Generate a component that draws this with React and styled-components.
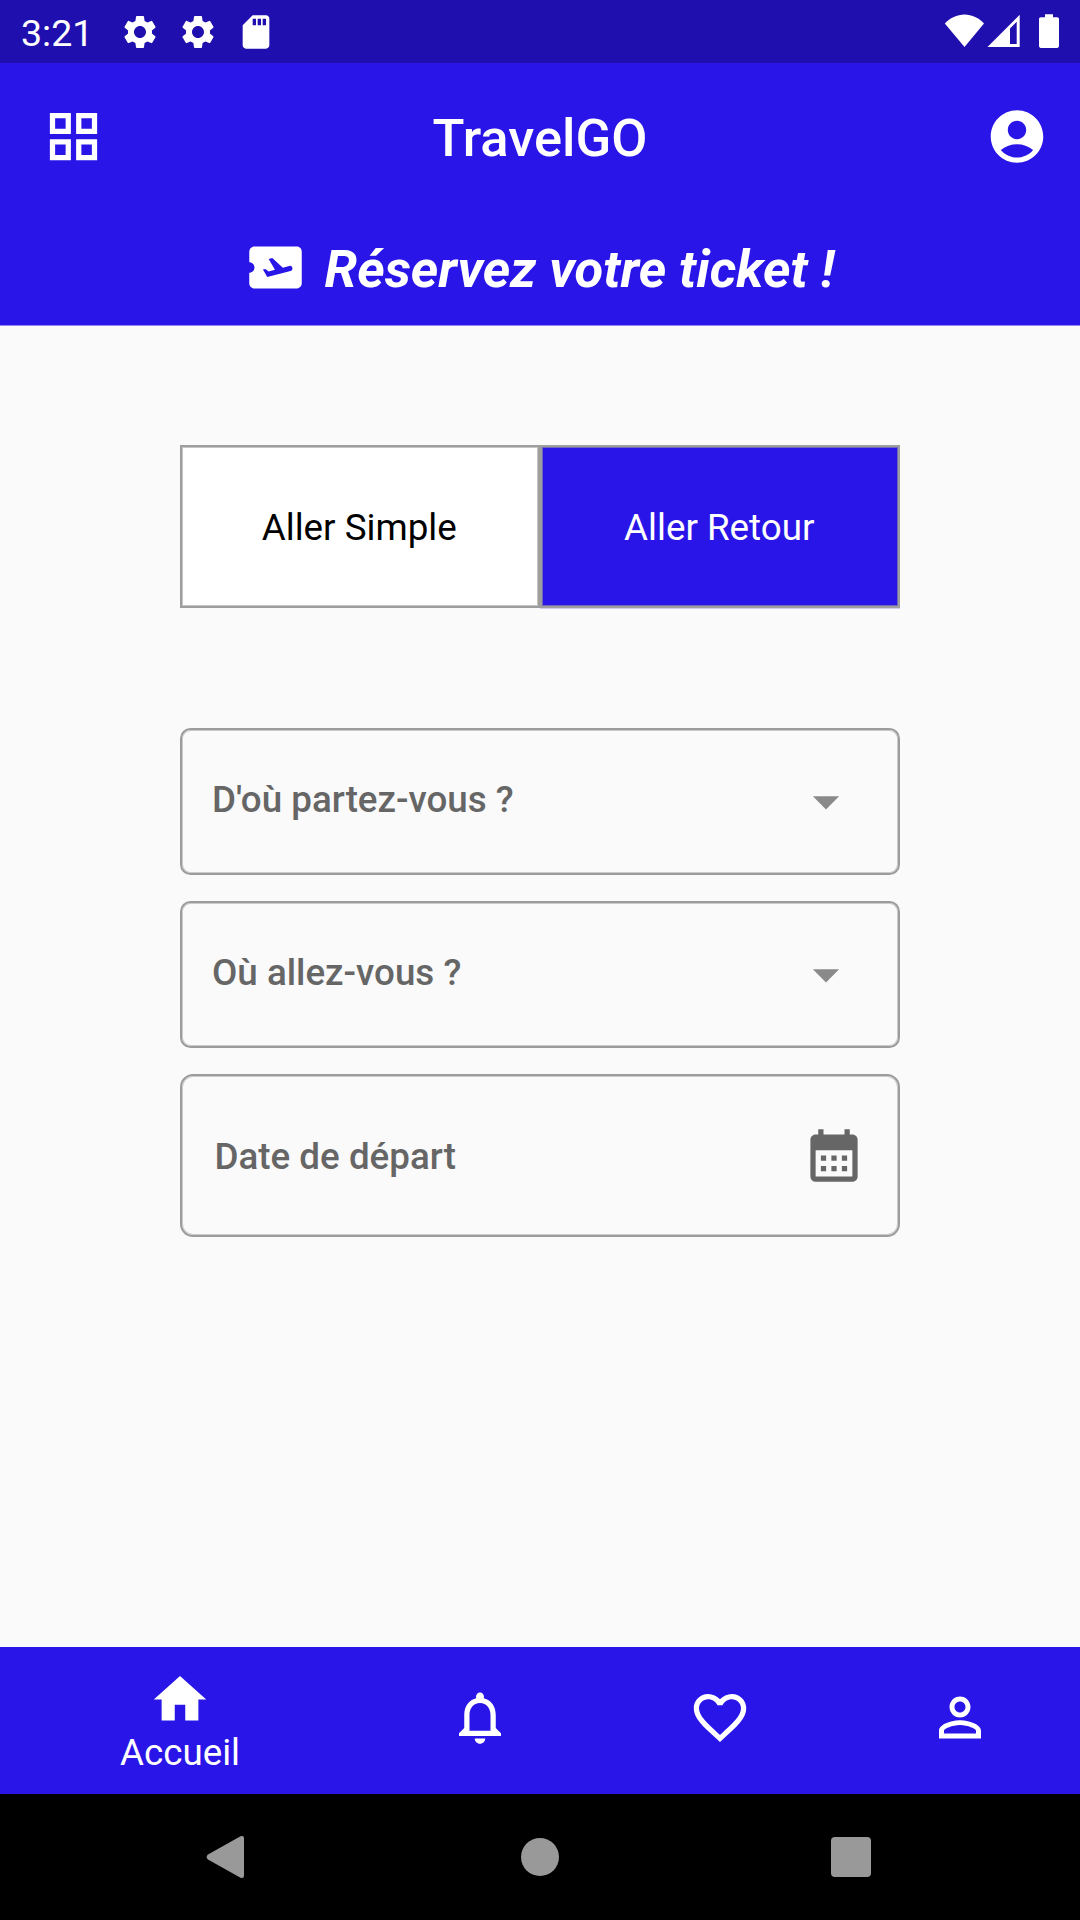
import React from 'react';
import styled, { createGlobalStyle } from 'styled-components';
import {
  MdOutlineGridView,
  MdAccountCircle,
  MdAirplaneTicket,
  MdArrowDropDown,
  MdCalendarMonth,
  MdFavoriteBorder,
  MdSettings,
  MdSdCard,
} from 'react-icons/md';

const BLUE = '#2915e8';

const GlobalStyle = createGlobalStyle`
  * { box-sizing: border-box; }
  body { margin: 0; background: #fafafa; }
  button { font: inherit; color: inherit; background: none; border: 0; padding: 0; }
`;

const Screen = styled.div`
  display: flex;
  flex-direction: column;
  width: 1080px;
  height: 1920px;
  overflow: hidden;
  background: #fafafa;
  font-family: Roboto, 'Liberation Sans', sans-serif;
  font-size: 36.75px;
`;

const StatusBar = styled.div`
  display: flex;
  align-items: center;
  justify-content: space-between;
  height: 63px;
  flex: none;
  padding: 0 21px;
  background: #1f0fae;
  color: #fff;
`;

const StatusGroup = styled.div`
  display: flex;
  align-items: center;
  height: 63px;
`;

const Clock = styled.span`
  width: 99px;
  padding-top: 4px;
  font-size: 37.5px;
  line-height: 43px;
`;

const StatusIcon = styled.span`
  display: flex;
  width: 40px;
  margin-right: 18px;
  svg { width: 40px; height: 40px; }
`;

const Header = styled.header`
  display: flex;
  flex-direction: column;
  flex: none;
  height: 262px;
  background: ${BLUE};
  box-shadow: 0 1px 0 rgba(41, 20, 232, 0.5);
  color: #fff;
`;

const AppBar = styled.div`
  display: grid;
  grid-template-columns: 63px 1fr 63px;
  align-items: center;
  height: 147px;
  padding: 0 32px 0 42px;
`;

const Title = styled.h1`
  margin: 0;
  padding: 2px 10px 0 0;
  text-align: center;
  font-size: 52.5px;
  font-weight: 500;
  line-height: 62px;
`;

const Banner = styled.div`
  display: flex;
  align-items: center;
  justify-content: center;
  gap: 18px;
  height: 115px;
  padding-right: 2px;
`;

const BannerText = styled.h2`
  margin: 0;
  padding-top: 2px;
  font-size: 52.5px;
  font-weight: 700;
  font-style: italic;
  line-height: 62px;
`;

const Glyph = styled.span`
  display: flex;
  color: ${(p) => p.$color || 'inherit'};
  svg {
    width: 63px;
    height: 63px;
    transform: ${(p) => (p.$half ? 'translateX(0.5px)' : 'none')};
  }
`;

const Content = styled.main`
  display: flex;
  flex-direction: column;
  flex: 1;
  width: 720px;
  margin: 0 auto;
  padding-top: 120px;
`;

const Toggle = styled.div`
  display: grid;
  grid-template-columns: 1fr 1fr;
  height: 163px;
  margin-bottom: 120px;
`;

const ToggleOption = styled.button`
  padding: 2px 1.5px 0 0;
  border: 2px solid #9e9e9e;
  box-shadow:
    inset 0 0 0 1px rgba(158, 158, 158, 0.6),
    0 1px 0 ${(p) => (p.$active ? 'rgba(41, 20, 232, 0.2)' : 'transparent')};
  background: ${(p) => (p.$active ? BLUE : '#fff')};
  color: ${(p) => (p.$active ? '#fff' : '#000')};
`;

const Field = styled.div`
  display: flex;
  align-items: center;
  justify-content: space-between;
  height: ${(p) => p.$height}px;
  margin-bottom: 26px;
  padding: ${(p) => p.$padding};
  border: 2px solid #9c9c9c;
  border-radius: ${(p) => p.$radius}px;
  box-shadow: inset 0 0 0 1px rgba(156, 156, 156, 0.5);
  color: #666;
  font-weight: 500;
`;

const FieldLabel = styled.span`
  line-height: 43px;
  padding-top: ${(p) => p.$drop || 0}px;
  padding-bottom: ${(p) => p.$lift || 0}px;
`;

const BottomNav = styled.nav`
  display: grid;
  grid-template-columns: 1.5fr 1fr 1fr 1fr;
  flex: none;
  height: 147px;
  background: ${BLUE};
  color: #fff;
`;

const NavItem = styled.button`
  display: flex;
  flex-direction: column;
  align-items: center;
  justify-content: flex-start;
  padding: ${(p) => (p.$active ? 21 : 39)}px 1px 0 0;
`;

const NavLabel = styled.span`
  padding-left: 1px;
  line-height: 43px;
`;

const SystemNav = styled.div`
  display: grid;
  grid-template-columns: 39px 1fr 40px;
  align-items: center;
  justify-items: center;
  flex: none;
  height: 126px;
  padding: 0 209px 0 206px;
  background: #000;
`;

const Wifi = () => (
  <svg width="40" height="34" viewBox="0 0 40 34">
    <path fill="#fff" d="M20.500 33 .8 9.600C6 4 13 .500 20.500 .500S35 4 40 9.600z" />
  </svg>
);

const Cell = () => (
  <svg width="33" height="34" viewBox="0 0 33 34">
    <path fill="#fff" fillRule="evenodd" d="M.5 33 32.700.700V33zM23 14.500V30h6.700V7.800z" />
  </svg>
);

const Battery = () => (
  <svg width="20" height="34" viewBox="0 0 20 34">
    <path fill="#fff" d="M6 .3h8v3h4.200c1 0 1.800.800 1.800 1.800v27c0 1-.800 1.800-1.800 1.800H1.800C.800 33.900 0 33.100 0 32.100v-27c0-1 .800-1.800 1.800-1.800H6z" />
  </svg>
);

const SignalIcons = styled.div`
  display: flex;
  align-items: center;
  height: 63px;
  gap: 3px;
  padding-bottom: 1px;
  svg:last-child { margin-left: 16px; }
`;

const Home = () => (
  <svg viewBox="0 0 24 24" fill="currentColor">
    <path d="M10 20v-6h4v6h5v-8h3L12 3 2 12h3v8z" />
  </svg>
);

const Bell = () => (
  <svg viewBox="0 0 24 24" fill="currentColor">
    <path d="M12 22c1.100 0 2-.9 2-2h-4c0 1.100.9 2 2 2zm6-6v-5c0-3.070-1.630-5.640-4.500-6.320V4c0-.830-.670-1.500-1.500-1.500s-1.500.670-1.500 1.500v.680C7.640 5.360 6 7.920 6 11v5l-2 2v1h16v-1l-2-2zm-2 1H8v-6c0-2.480 1.510-4.500 4-4.500s4 2.020 4 4.500v6z" />
  </svg>
);

const Person = () => (
  <svg viewBox="0 0 24 24" fill="currentColor">
    <path d="M12 5.900c1.160 0 2.100.940 2.100 2.100s-.940 2.100-2.100 2.100S9.900 9.160 9.900 8s.940-2.100 2.100-2.100m0 9c2.970 0 6.100 1.460 6.100 2.100v1.100H5.900V17c0-.640 3.130-2.100 6.100-2.100M12 4C9.790 4 8 5.790 8 8s1.790 4 4 4 4-1.790 4-4-1.790-4-4-4zm0 9c-2.670 0-8 1.340-8 4v3h16v-3c0-2.660-5.330-4-8-4z" />
  </svg>
);

const BackKey = () => (
  <svg width="39" height="44" viewBox="0 0 39 44">
    <path fill="#999" d="M2 19.600 34.500 1.200Q38 .200 38 3v38q0 2.800-3.500 1.800L2 24.400Q-.800 22 2 19.600z" />
  </svg>
);

const HomeKey = styled.span`
  width: 38.5px;
  height: 38.5px;
  margin-left: 4px;
  border-radius: 50%;
  background: #999;
`;

const RecentsKey = styled.span`
  width: 40px;
  height: 40px;
  border-radius: 4px;
  background: #999;
`;

export default function App() {
  return (
    <Screen>
      <GlobalStyle />
      <StatusBar>
        <StatusGroup>
          <Clock>3:21</Clock>
          <StatusIcon><MdSettings /></StatusIcon>
          <StatusIcon><MdSettings /></StatusIcon>
          <StatusIcon><MdSdCard /></StatusIcon>
        </StatusGroup>
        <SignalIcons>
          <Wifi />
          <Cell />
          <Battery />
        </SignalIcons>
      </StatusBar>
      <Header>
        <AppBar>
          <Glyph><MdOutlineGridView /></Glyph>
          <Title>TravelGO</Title>
          <Glyph $half><MdAccountCircle /></Glyph>
        </AppBar>
        <Banner>
          <Glyph><MdAirplaneTicket /></Glyph>
          <BannerText>Réservez votre ticket !</BannerText>
        </Banner>
      </Header>
      <Content>
        <Toggle>
          <ToggleOption>Aller Simple</ToggleOption>
          <ToggleOption $active>Aller Retour</ToggleOption>
        </Toggle>
        <Field $height={147} $radius={10.5} $padding="0 41px 0 30px">
          <FieldLabel $lift={4}>D'où partez-vous ?</FieldLabel>
          <Glyph $half $color="#8a8a8a"><MdArrowDropDown /></Glyph>
        </Field>
        <Field $height={147} $radius={10.5} $padding="0 41px 0 30px">
          <FieldLabel $lift={4}>Où allez-vous ?</FieldLabel>
          <Glyph $half $color="#8a8a8a"><MdArrowDropDown /></Glyph>
        </Field>
        <Field $height={163} $radius={13} $padding="0 33px 0 32.5px">
          <FieldLabel $drop={2}>Date de départ</FieldLabel>
          <Glyph $half><MdCalendarMonth /></Glyph>
        </Field>
      </Content>
      <BottomNav>
        <NavItem $active>
          <Glyph $half><Home /></Glyph>
          <NavLabel>Accueil</NavLabel>
        </NavItem>
        <NavItem><Glyph $half><Bell /></Glyph></NavItem>
        <NavItem><Glyph $half><MdFavoriteBorder /></Glyph></NavItem>
        <NavItem><Glyph $half><Person /></Glyph></NavItem>
      </BottomNav>
      <SystemNav>
        <BackKey />
        <HomeKey />
        <RecentsKey />
      </SystemNav>
    </Screen>
  );
}
